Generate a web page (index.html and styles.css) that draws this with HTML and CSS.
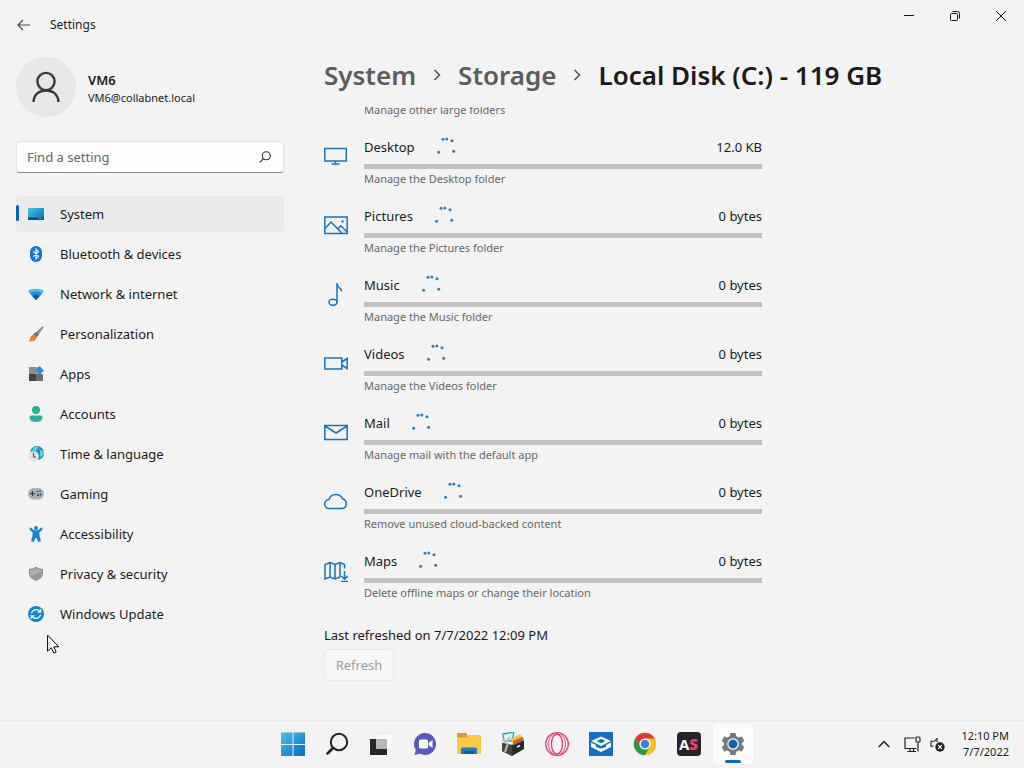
FILE: index.html
```
<!DOCTYPE html>
<html lang="en">
<head>
    <meta charset="UTF-8">
    <meta name="viewport" content="width=device-width, initial-scale=1.0">
    <title>Settings</title>
    <link rel="stylesheet" href="styles.css">
</head>
<body>
    <header class="titlebar">
        <button class="back" aria-label="Back">
            <svg width="14" height="12" viewBox="0 0 14 12" fill="none" stroke="#444" stroke-width="1.1"><path d="M6 1L1 6l5 5M1 6h12"/></svg>
        </button>
        <span class="app-name">Settings</span>
        <div class="window-buttons">
            <button aria-label="Minimize"><svg width="10" height="10" stroke="#111"><path d="M0 4.5h10"/></svg></button>
            <button aria-label="Restore"><svg width="10" height="10" fill="none" stroke="#111"><rect x=".5" y="2.5" width="7" height="7" rx="1"/><path d="M2.5.5H7.500Q9.500.5 9.500 2.500V7.500"/></svg></button>
            <button aria-label="Close"><svg width="10" height="10" stroke="#111"><path d="M0 0l10 10M10 0L0 10"/></svg></button>
        </div>
    </header>

    <div class="window">
        <aside class="sidebar">
            <div class="profile">
                <div class="avatar">
                    <svg width="28" height="32" viewBox="0 0 28 32" fill="none" stroke="#3a3a3a" stroke-width="2.400"><circle cx="14" cy="10.500" r="8.600"/><path d="M1.500 31C2 23.500 7 19.500 14 19.500S26 23.500 26.500 31"/></svg>
                </div>
                <div class="account">
                    <p class="user">VM6</p>
                    <p class="email">VM6@collabnet.local</p>
                </div>
            </div>
            <div class="search">
                <input type="text" placeholder="Find a setting" aria-label="Find a setting">
                <svg width="12" height="12" viewBox="0 0 12 12" fill="none" stroke="#333" stroke-width="1.100"><circle cx="7.300" cy="4.700" r="4"/><path d="M4.500 7.500L.6 11.400"/></svg>
            </div>
            <nav>
                <a class="active" href="#system">
                    <svg width="16" height="16" viewBox="0 0 16 16"><defs><linearGradient id="sys" x1="0" y1="0" x2="1" y2="1"><stop offset="0" stop-color="#35cbe8"/><stop offset="1" stop-color="#0b6fae"/></linearGradient></defs><rect y="2" width="16" height="12" rx="1" fill="url(#sys)"/><path d="M0 11.500h16V13q0 1-1 1H1q-1 0-1-1z" fill="#0b4a6c"/><path d="M10.500 12.500h1M12.500 12.500h1" stroke="#8de3f5"/></svg>
                    System
                </a>
                <a href="#bluetooth">
                    <svg width="16" height="16" viewBox="0 0 16 16"><rect x="2" width="12" height="16" rx="6" fill="#0d78e0"/><path d="M5.300 5.300l5.200 5L8 12.800V3.200l2.500 2.500-5.200 5" fill="none" stroke="#fff" stroke-width="1.100"/></svg>
                    Bluetooth &amp; devices
                </a>
                <a href="#network">
                    <svg width="16" height="16" viewBox="0 0 16 16"><path d="M0 5.500Q1 2.700 8 2.700t8 2.800L8 14z" fill="#3dc6ea"/><path d="M2 7.700Q4 5.500 8 5.500t6 2.200L8 14z" fill="#1793d8"/><path d="M4.500 10.200Q6 8.600 8 8.600t3.500 1.600L8 14z" fill="#1253a8"/></svg>
                    Network &amp; internet
                </a>
                <a href="#personalization">
                    <svg width="16" height="16" viewBox="0 0 16 16"><path d="M5.500 8.500L14 .5q1.500-.5 1.700 1L8.500 11.500z" fill="#8b989f"/><path d="M8.500 6L11 8.500 8 12 5 8.500z" fill="#64747d"/><path d="M5.500 8.500q3 .5 3 3.500Q7 16 .5 15.500q1.500-1 1.700-3.500.6-3 3.300-3.500z" fill="#ec8527"/></svg>
                    Personalization
                </a>
                <a href="#apps">
                    <svg width="16" height="16" viewBox="0 0 16 16"><path d="M1 1h7v7H1z" fill="#8b8d90"/><path d="M1 8h7v7H1z" fill="#414345"/><path d="M8 8h7v7H8z" fill="#696b6e"/><path d="M8 1h3v7H8z" fill="#a5a7a9"/><path d="M11.500 0l4.500 4.500L11.500 9 7 4.500z" fill="#268fe0"/></svg>
                    Apps
                </a>
                <a href="#accounts">
                    <svg width="16" height="16" viewBox="0 0 16 16"><circle cx="8" cy="4" r="4" fill="#25b18d"/><path d="M3.500 9.500h9q2 0 2 2Q14 16 8 16t-6.500-4.500q0-2 2-2z" fill="#20b59b"/></svg>
                    Accounts
                </a>
                <a href="#time">
                    <svg width="16" height="16" viewBox="0 0 16 16"><circle cx="9" cy="7" r="7" fill="#1797c5"/><path d="M7 1q3-1 3 1L8 5 4 4q1-2 3-3zM12 4l3.500 1v4L12 11z" fill="#5bd5dc"/><circle cx="5.500" cy="10.200" r="5.300" fill="#e3e4e5"/><path d="M5.500 6.800v4.200H8" fill="none" stroke="#46494b" stroke-width="1.100"/></svg>
                    Time &amp; language
                </a>
                <a href="#gaming">
                    <svg width="16" height="16" viewBox="0 0 16 16"><rect y="2" width="16" height="11.500" rx="5.700" fill="#a8b0b8"/><path d="M2 7.500h5M4.500 5v5" stroke="#363c42" stroke-width="1.200"/><circle cx="10" cy="9.200" r="1" fill="#363c42"/><circle cx="12.500" cy="8.500" r="1" fill="#363c42"/><circle cx="9.500" cy="5.500" r=".8" fill="#363c42"/><circle cx="12" cy="5" r=".9" fill="#59616a"/></svg>
                    Gaming
                </a>
                <a href="#accessibility">
                    <svg width="16" height="16" viewBox="0 0 16 16" fill="#1787d2"><circle cx="8" cy="2" r="2"/><path d="M2.500 1.300Q5 4.300 8 4.300t5.500-3l1.200 1.700Q13 5.500 11.500 6v3.700l1.400 5.600-2.600.7L8 11.300 5.700 16l-2.600-.7 1.400-5.600V6Q3 5.500 1.300 3z"/></svg>
                    Accessibility
                </a>
                <a href="#privacy">
                    <svg width="16" height="16" viewBox="0 0 16 16"><path d="M8 .8Q11 3 15 3v4.500Q14.500 12.500 8 15 1.500 12.500 1 7.500V3q4 0 7-2.200z" fill="#858789"/><path d="M8 2Q11 4 14 4v3.500Q13.500 11.800 8 14 2.500 11.800 2 7.500V4q3 0 6-2z" fill="#adafb1"/><path d="M14 7.500Q13.500 11.800 8 14 4.500 12.600 3 10.500L14 5z" fill="#96989a"/></svg>
                    Privacy &amp; security
                </a>
                <a href="#update">
                    <svg width="16" height="16" viewBox="0 0 16 16"><circle cx="8" cy="8" r="8" fill="#1684d4"/><g fill="none" stroke="#fff" stroke-width="1.300"><path d="M3.400 7.200Q5 3.500 8.500 3.600q2.500.2 3.700 2.400M12.600 3.200v3H9.600M12.600 8.800Q11 12.500 7.500 12.400 5 12.200 3.800 10M3.400 12.800v-3h3"/></g></svg>
                    Windows Update
                </a>
            </nav>
        </aside>

        <main>
            <h1 class="breadcrumb">
                <a href="#system">System</a>
                <svg width="8" height="12" viewBox="0 0 8 12" fill="none" stroke="#555" stroke-width="1.600"><path d="M1.500 1l5 5-5 5"/></svg>
                <a href="#storage">Storage</a>
                <svg width="8" height="12" viewBox="0 0 8 12" fill="none" stroke="#555" stroke-width="1.600"><path d="M1.500 1l5 5-5 5"/></svg>
                <span>Local Disk (C:) - 119 GB</span>
            </h1>
            <div class="scroller">
                <ul class="storage">
                    <li>
                        <p class="desc">Manage other large folders</p>
                    </li>
                    <li>
                        <svg class="icon" viewBox="0 0 24 24"><path d="M.8 4.500h21.500v12.500H.8zM11.500 17v3M7.500 20h8"/></svg>
                        <div class="row"><span>Desktop</span><svg class="loader"><use href="#dots"/></svg><span class="size">12.0 KB</span></div>
                        <progress value="0" max="100" aria-label="Desktop"></progress>
                        <p class="desc">Manage the Desktop folder</p>
                    </li>
                    <li>
                        <svg class="icon" viewBox="0 0 24 24"><path d="M.8 4h22.400v16.500H.8zM1 15.500L7 9l11 11.300M13.500 16l3.300-3.200 6 6"/><circle cx="18.500" cy="8.500" r=".5"/></svg>
                        <div class="row"><span>Pictures</span><svg class="loader"><use href="#dots"/></svg><span class="size">0 bytes</span></div>
                        <progress value="0" max="100" aria-label="Pictures"></progress>
                        <p class="desc">Manage the Pictures folder</p>
                    </li>
                    <li>
                        <svg class="icon" viewBox="0 0 24 24"><ellipse cx="9" cy="20.300" rx="4" ry="3"/><path d="M13 20.500V1q.3 3.500 2.500 4.800 2 1.300 2 3.700"/></svg>
                        <div class="row"><span>Music</span><svg class="loader"><use href="#dots"/></svg><span class="size">0 bytes</span></div>
                        <progress value="0" max="100" aria-label="Music"></progress>
                        <p class="desc">Manage the Music folder</p>
                    </li>
                    <li>
                        <svg class="icon" viewBox="0 0 24 24"><path d="M.8 7h17v11h-17zM17.800 11l5.400-3.500v10l-5.400-3.500"/></svg>
                        <div class="row"><span>Videos</span><svg class="loader"><use href="#dots"/></svg><span class="size">0 bytes</span></div>
                        <progress value="0" max="100" aria-label="Videos"></progress>
                        <p class="desc">Manage the Videos folder</p>
                    </li>
                    <li>
                        <svg class="icon" viewBox="0 0 24 24"><path d="M.8 5.500h22.400v14H.8zM1 6l11 7L23 6"/></svg>
                        <div class="row"><span>Mail</span><svg class="loader"><use href="#dots"/></svg><span class="size">0 bytes</span></div>
                        <progress value="0" max="100" aria-label="Mail"></progress>
                        <p class="desc">Manage mail with the default app</p>
                    </li>
                    <li>
                        <svg class="icon" viewBox="0 0 24 24"><path d="M5.500 19.500a4.500 4.500 0 0 1-.5-9 7.200 7.200 0 0 1 13.500-.7 5 5 0 0 1 0 9.700z"/></svg>
                        <div class="row"><span>OneDrive</span><svg class="loader"><use href="#dots"/></svg><span class="size">0 bytes</span></div>
                        <progress value="0" max="100" aria-label="OneDrive"></progress>
                        <p class="desc">Remove unused cloud-backed content</p>
                    </li>
                    <li>
                        <svg class="icon" viewBox="0 0 24 24"><path d="M16 19l-5 2-5-2-5 2V6.500l5-2 5 2 5-2 4.500 2v4M6 4.500V19M11 6.500V21M16 4.500V19M20.500 13v8M17.300 18l3.200 3.200 3.200-3.200M17 23.500h7"/></svg>
                        <div class="row"><span>Maps</span><svg class="loader"><use href="#dots"/></svg><span class="size">0 bytes</span></div>
                        <progress value="0" max="100" aria-label="Maps"></progress>
                        <p class="desc">Delete offline maps or change their location</p>
                    </li>
                </ul>
                <p class="refreshed">Last refreshed on 7/7/2022 12:09 PM</p>
                <button class="refresh" disabled>Refresh</button>
            </div>
        </main>
    </div>

    <footer class="taskbar">
        <div class="apps">
            <button aria-label="Start"><svg width="24" height="24" viewBox="0 0 24 24"><defs><linearGradient id="win" x1="0" y1="0" x2="1" y2="1"><stop offset="0" stop-color="#43c3f5"/><stop offset="1" stop-color="#0868c8"/></linearGradient></defs><path fill="url(#win)" d="M0 .5h11.500V12H0zM12.500.5H24V12H12.500zM0 13h11.500v11H0zM12.500 13H24v11H12.500z"/></svg></button>
            <button aria-label="Search"><svg width="24" height="24" viewBox="0 0 24 24" fill="none" stroke="#242424"><circle cx="14" cy="10" r="8.200" stroke-width="2"/><path d="M8 16l-5.500 5.500" stroke-width="2.600" stroke-linecap="round"/></svg></button>
            <button aria-label="Task view"><svg width="24" height="24" viewBox="0 0 24 24"><rect x="7" y="1" width="17" height="16" rx="1" fill="#f8f8f8" stroke="#e8e8e8"/><path d="M1 7h17v16H1z" fill="#262728"/><path d="M7 7h11v10H7z" fill="#b5b6b7"/></svg></button>
            <button aria-label="Chat"><svg width="24" height="24" viewBox="0 0 24 24"><path d="M12 1a11 11 0 1 1-5 20.800L1.500 23l1.300-5A11 11 0 0 1 12 1z" fill="#5b59bd"/><rect x="6" y="7.500" width="9" height="9" rx="1.500" fill="#fff"/><path d="M15.500 11l4-3v8l-4-3z" fill="#fff"/></svg></button>
            <button aria-label="File Explorer"><svg width="24" height="24" viewBox="0 0 24 24"><path d="M0 2q0-1 1-1h8l2 3v6H0z" fill="#dc9b20"/><path d="M0 5.500h9.500L11.500 3H23q1 0 1 1v17q0 1-1 1H1q-1 0-1-1z" fill="#fbca45"/><path d="M4 22v-5q0-1.500 1.500-1.500h13q1.500 0 1.500 1.500v5z" fill="#167dc5"/><path d="M7 22v-3h10v3z" fill="#0b62a5"/></svg></button>
            <button aria-label="Toolbox"><svg width="24" height="24" viewBox="0 0 24 24"><path d="M2 2l11-2-2 9H3z" fill="#d5f2f4" stroke="#39a6b0" stroke-width="1.300"/><path d="M10 7l9-5 4 5-11 5z" fill="#f1c831"/><path d="M12 9l10-4v4l-10 4z" fill="#df542d"/><path d="M1 11l10 2 12-5v9l-12 7-10-5z" fill="#292b27"/><path d="M1 11l10 2v11L1 19z" fill="#444540"/><path d="M11 13l12-5" stroke="#898770"/><path d="M16 15l3-1.500" stroke="#eee" stroke-width="1.500"/><path d="M2 7q0 3 3 3l4-5M7 11l-3 9" fill="none" stroke="#bfc1b8" stroke-width="2"/></svg></button>
            <button aria-label="Opera GX"><svg width="24" height="24" viewBox="0 0 24 24" fill="none" stroke="#e13c62" stroke-width="1.300"><circle cx="12" cy="12" r="11.300"/><ellipse cx="12" cy="12" rx="5.500" ry="10"/><path d="M9 1.500Q3.500 5 3.500 12T9 22.500M15 1.500q5.500 3.500 5.500 10.500T15 22.500" stroke-width=".9"/></svg></button>
            <button aria-label="Sandbox"><svg width="24" height="24" viewBox="0 0 24 24"><path d="M0 0h24v24H0z" fill="#116fca"/><path d="M12 4.500l10 4.500-10 5L2 9z" fill="#fff"/><path d="M12 7l4.500 2.100-4.500 2.200-4.500-2.200z" fill="#116fca"/><path d="M2 10.500l5 2.500v2l5 1.500 5-1.500v-2l5-2.500V15l-10 5-10-5z" fill="#fff"/></svg></button>
            <button aria-label="Chrome"><svg width="24" height="24" viewBox="0 0 24 24"><circle cx="12" cy="12" r="11.200" fill="#fbc116"/><path d="M2.300 6.400A11.200 11.200 0 0 1 21.700 6.400H12L7.200 14.800z" fill="#df3c30"/><path d="M2.300 6.400A11.200 11.200 0 0 0 12 23.200L16.800 14.800 12 17.600 7.200 14.800z" fill="#27994b"/><circle cx="12" cy="12" r="5.600" fill="#fff"/><circle cx="12" cy="12" r="4.300" fill="#3c7de0"/></svg></button>
            <button class="as" aria-label="AS"><span>A</span><b>S</b></button>
            <button class="open" aria-label="Settings"><svg width="24" height="24" viewBox="0 0 24 24"><path d="M9.500 1h5l.9 3.300 2 1.100 3.300-.9 2.600 4.300-2.400 2.400v1.600l2.400 2.400-2.600 4.300-3.300-.9-2 1.100-.9 3.300h-5l-.9-3.300-2-1.100-3.300.9L.7 15.200l2.400-2.400v-1.600L.7 8.800l2.600-4.300 3.300.9 2-1.100z" fill="#737b82"/><circle cx="12" cy="12" r="6" fill="#c9dce9"/><circle cx="12" cy="12" r="4.300" fill="#1261a5"/></svg></button>
        </div>
        <div class="tray">
            <button aria-label="Show hidden icons"><svg width="12" height="8" viewBox="0 0 12 8" fill="none" stroke="#222" stroke-width="1.500"><path d="M.8 7L6 1.500 11.200 7"/></svg></button>
            <button class="status" aria-label="Network and sound">
                <svg width="17" height="17" viewBox="0 0 17 17" fill="none" stroke="#222" stroke-width="1.200"><path d="M10.500 2H1v10.500h11.500M3.500 15.500H12M6 12.500v3M9.500 12.500v3M14 6v9.500"/><rect x="12" y="1" width="4" height="5" rx="1"/></svg>
                <svg width="15" height="15" viewBox="0 0 15 15"><path d="M7 1.500L4.500 4.300H1v5h2.500M7 1v4" fill="none" stroke="#222" stroke-width="1.100"/><circle cx="10" cy="10" r="4.700" fill="#222"/><path d="M8.200 8.200l3.600 3.600M11.800 8.200l-3.600 3.600" stroke="#fff" stroke-width="1.200"/></svg>
            </button>
            <p class="clock">12:10 PM<br>7/7/2022</p>
        </div>
    </footer>

    <!-- loading dots, shared by all rows -->
    <svg class="sprite">
        <symbol id="dots" viewBox="0 0 20 20" fill="#2f7fb8"><circle cx="7" cy="2.300" r="1.500"/><circle cx="10.800" cy="1.900" r="1.500"/><circle cx="16" cy="3.800" r="1.500"/><circle cx="2.600" cy="15.300" r="1.500"/><circle cx="17.700" cy="14.300" r="1.500"/></symbol>
    </svg>
    <svg class="cursor" width="13" height="20" viewBox="0 0 13 20"><path d="M.6 1.200v16l3.700-3.500 2.500 5.400 2.400-1.100-2.400-5.200h5z" fill="#fff" stroke="#000"/></svg>
</body>
</html>
```

FILE: styles.css
```
*{
    box-sizing: border-box;
}
body{
    margin:0;
    height: 100vh;
    display: flex;
    flex-direction: column;
    overflow: hidden;
    background-color: #f3f3f3;
    color: #1b1b1b;
    font-family: "Noto Sans", "Open Sans", sans-serif;
    font-size: 13px;
    line-height: 20px;
}
p, h1, ul{
    margin:0;
    padding:0;
}
ul{
    list-style: none;
}
a{
    color: inherit;
    text-decoration: none;
}
button{
    display: flex;
    align-items: center;
    justify-content: center;
    padding: 0;
    border: none;
    background: none;
    color: inherit;
    font: inherit;
}
svg{
    flex: none;
}

.titlebar{
    display: flex;
    align-items: center;
    height: 49px;
}
.back{
    width: 48px;
    height: 48px;
}
.app-name{
    padding-left: 2px;
    font-size: 12px;
}
.window-buttons{
    display: flex;
    align-self: flex-start;
    margin-left: auto;
}
.window-buttons button{
    width: 46px;
    height: 32px;
}

.window{
    flex: 1;
    display: flex;
    min-height: 0;
}
.sidebar{
    flex: none;
    width: 300px;
    padding: 8px 16px 0;
}
.profile{
    display: flex;
    align-items: center;
    gap: 12px;
}
.avatar{
    display: flex;
    align-items: center;
    justify-content: center;
    width: 60px;
    height: 60px;
    border-radius: 50%;
    background-color: #e7e7e7;
}
.account{
    padding-top: 3px;
}
.user{
    font-weight: 600;
    line-height: 18px;
}
.email{
    font-size: 11px;
    line-height: 18px;
}
.search{
    display: flex;
    align-items: center;
    height: 32px;
    margin-top: 24px;
    padding: 0 12px 0 10px;
    border: 1px solid #e3e3e3;
    border-bottom-color: #868686;
    border-radius: 4px;
    background-color: #fdfdfd;
}
.search input{
    flex: 1;
    min-width: 0;
    padding: 0;
    border: none;
    outline: none;
    background: none;
    font: inherit;
}
.search input::placeholder{
    color: #666;
}
nav{
    display: flex;
    flex-direction: column;
    gap: 4px;
    margin-top: 23px;
}
nav a{
    position: relative;
    display: flex;
    align-items: center;
    gap: 16px;
    height: 36px;
    padding-left: 12px;
    border-radius: 4px;
}
nav .active{
    background-color: #eaeaea;
}
nav .active::before{
    content: "";
    position: absolute;
    left: 0;
    top: 9px;
    width: 3px;
    height: 16px;
    border-radius: 2px;
    background-color: #0f5fb4;
}

main{
    flex: 1;
    display: flex;
    flex-direction: column;
    min-width: 0;
    padding: 6px 24px 0;
}
.breadcrumb{
    display: flex;
    align-items: center;
    gap: 17px;
    font-size: 26px;
    font-weight: 600;
    line-height: 40px;
    white-space: nowrap;
}
.breadcrumb a{
    color: #5c5c5c;
}
.scroller{
    flex: 1;
    min-height: 0;
    margin-top: 12px;
    overflow: hidden;
}
.storage{
    display: grid;
    gap: 19px;
    max-width: 438px;
    margin-top: -5px;
}
.storage li{
    position: relative;
    padding-left: 40px;
}
.icon{
    position: absolute;
    left: 0;
    top: 7px;
    width: 24px;
    height: 24px;
    fill: none;
    stroke: #1474bf;
    stroke-width: 1.5;
}
.row{
    display: flex;
    align-items: center;
}
.loader{
    width: 20px;
    height: 20px;
    margin-left: 21px;
}
.size{
    margin-left: auto;
}
progress{
    display: block;
    appearance: none;
    width: 100%;
    height: 5px;
    margin: 7px 0 2px;
    border: none;
    background-color: #c1c1c1;
}
progress::-webkit-progress-bar{
    background-color: #c1c1c1;
}
.desc{
    color: #686868;
    font-size: 11px;
    line-height: 16px;
}
.refreshed{
    margin-top: 24px;
}
.refresh{
    width: 70px;
    height: 32px;
    margin-top: 4px;
    border: 1px solid #e8e8e8;
    border-radius: 4px;
    background-color: #f7f7f7;
    color: #a0a0a0;
}

.taskbar{
    display: grid;
    grid-template-columns: 1fr auto 1fr;
    align-items: center;
    height: 48px;
    padding-bottom: 1px;
    border-top: 1px solid #e9e9e9;
}
.apps{
    grid-column: 2;
    display: flex;
    gap: 4px;
    padding-left: 1px;
}
.apps button{
    position: relative;
    width: 40px;
    height: 40px;
    border-radius: 4px;
}
.apps .open{
    background-color: #fcfcfc;
}
.open::after{
    content: "";
    position: absolute;
    left: 12px;
    bottom: 1px;
    width: 16px;
    height: 3px;
    border-radius: 2px;
    background-color: #1268bd;
}
.apps .as{
    width: 24px;
    height: 24px;
    margin: 8px;
    background-color: #25242a;
    color: #fff;
    font-size: 15px;
    font-weight: 700;
}
.as b{
    color: #ef3d65;
}
.tray{
    display: flex;
    align-items: center;
    justify-content: flex-end;
    gap: 14px;
    padding-right: 15px;
}
.status{
    gap: 9px;
}
.clock{
    margin-left: 2px;
    font-size: 11px;
    line-height: 16px;
    text-align: right;
}

.sprite{
    display: none;
}
.cursor{
    position: absolute;
    left: 47px;
    top: 634px;
}
```
